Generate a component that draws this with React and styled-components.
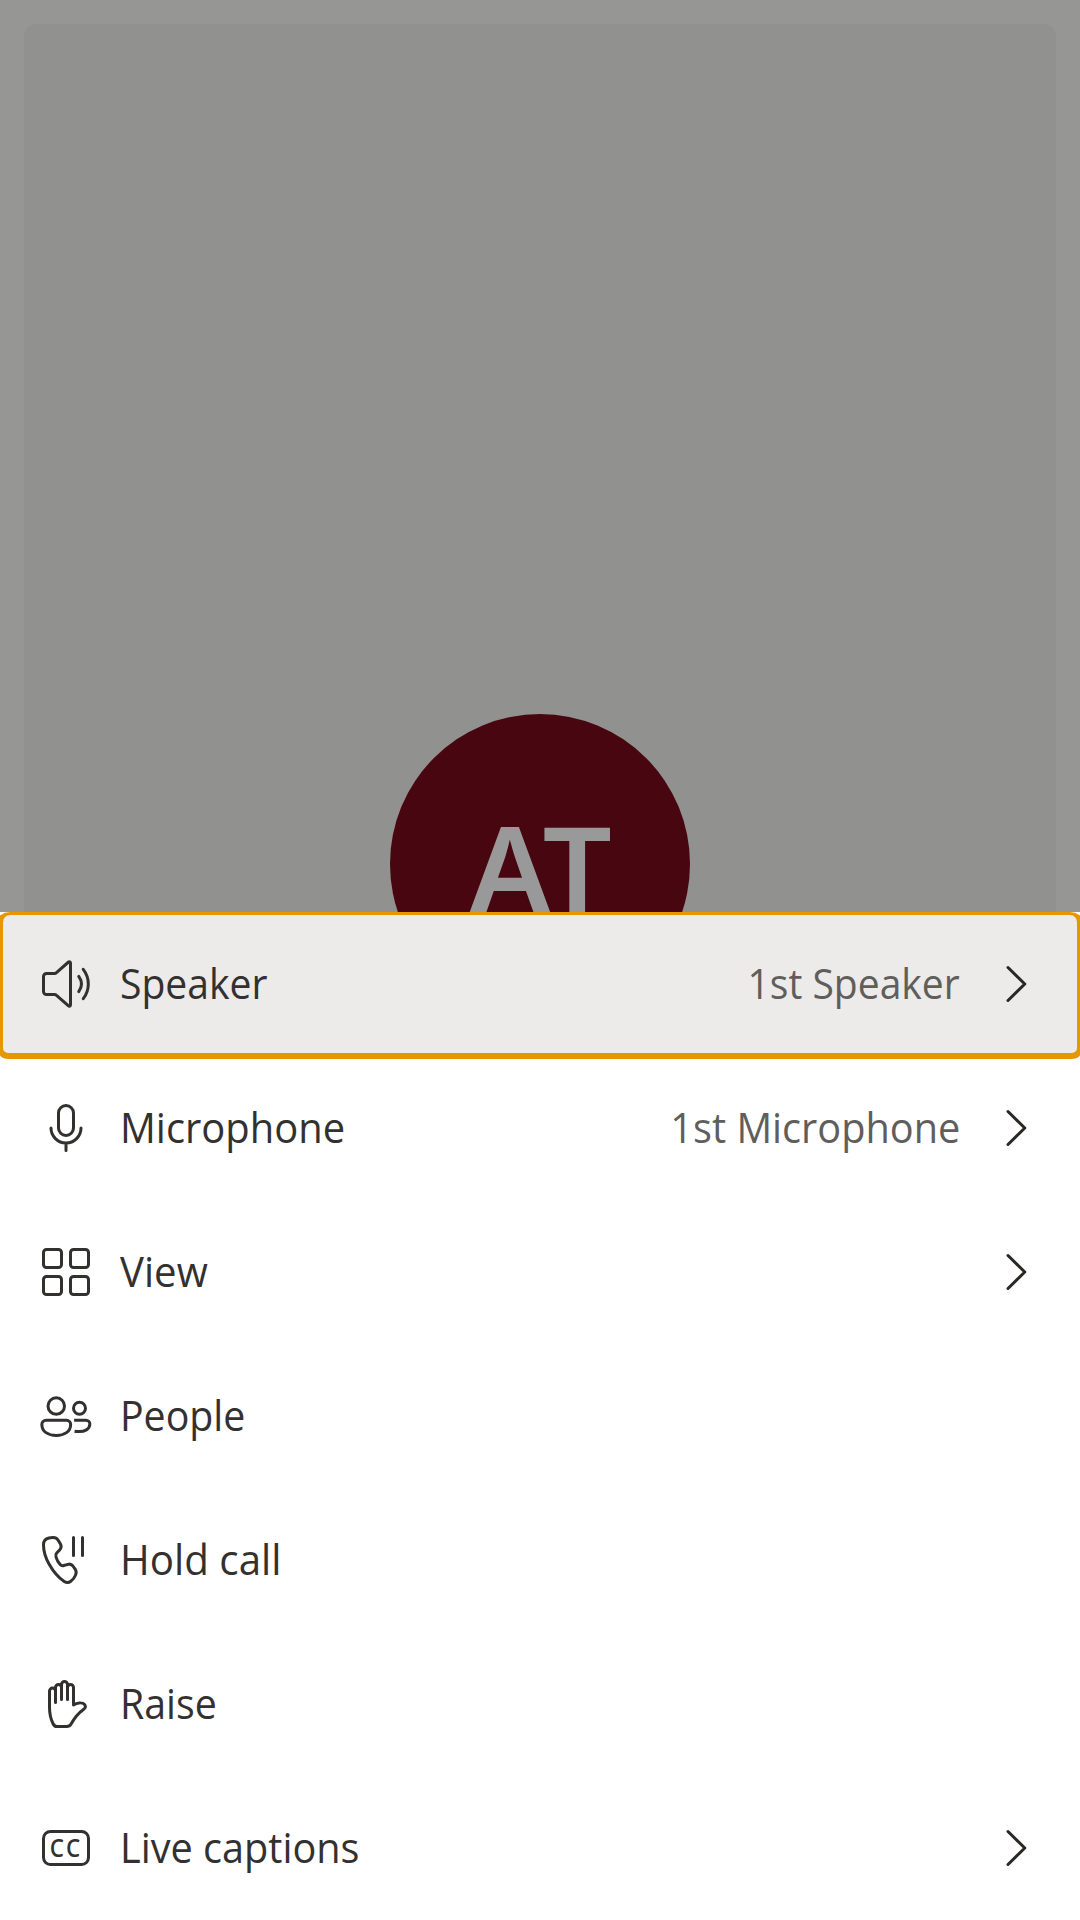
import React from "react";
import styled, { createGlobalStyle } from "styled-components";

const GlobalStyle = createGlobalStyle`
  body {
    margin: 0;
    background: #ffffff;
    font-family: "Open Sans", "Noto Sans", sans-serif;
  }
`;

const Screen = styled.main`
  display: flex;
  flex-direction: column;
  width: 1080px;
  height: 1920px;
  overflow: hidden;
  background: #ffffff;
`;

const CallStage = styled.section`
  box-sizing: border-box;
  flex: 0 0 912px;
  padding: 24px 24px 0;
  overflow: hidden;
  background: #969694;
`;

const ParticipantTile = styled.div`
  display: flex;
  justify-content: center;
  align-items: center;
  height: 1680px;
  border-radius: 12px;
  background: #91918f;
`;

const Avatar = styled.div`
  box-sizing: border-box;
  display: flex;
  justify-content: center;
  align-items: center;
  width: 300px;
  height: 300px;
  padding: 6px 0 0 1px;
  border-radius: 50%;
  background: #470610;
  color: #999999;
  font-family: "Noto Sans", "Open Sans", sans-serif;
  font-size: 122px;
  font-weight: 575;
  line-height: 1;
`;

const Sheet = styled.ul`
  display: flex;
  flex-direction: column;
  margin: 0;
  padding: 0;
  list-style: none;
`;

const Row = styled.li`
  position: relative;
  box-sizing: border-box;
  display: flex;
  align-items: center;
  gap: 24px;
  height: 144px;
  padding: 0 36px;
  color: #323130;
`;

const FocusRing = styled.span`
  position: absolute;
  z-index: 1;
  inset: 0 -3px -3px;
  border: solid #e59700;
  border-width: 3px 6px 6px;
  border-radius: 13px 13px 11px 11px / 10px 10px 11px 11px;
  background: #ecebe9;
`;

const Icon = styled.svg`
  position: relative;
  z-index: 2;
  flex: none;
  width: 60px;
  height: 60px;
  overflow: visible;
  fill: none;
  stroke: ${(p) => p.$tone || "#323130"};
  stroke-width: 1;
  stroke-linecap: round;
  stroke-linejoin: round;
`;

const Text = styled.span`
  position: relative;
  z-index: 2;
  padding-bottom: 2px;
  font-size: 41.5px;
  line-height: 56px;
  white-space: nowrap;
  transform: scaleX(${(p) => p.$squeeze});
`;

const Label = styled(Text)`
  flex: 1;
  transform-origin: left center;
`;

const Value = styled(Text)`
  color: #605e5c;
  transform-origin: right center;
`;

const CaptionMark = styled.text`
  fill: #323130;
  stroke: none;
  font-family: "Open Sans", sans-serif;
  font-size: 8.3px;
  font-weight: 600;
  letter-spacing: 0.75px;
`;

const icons = {
  speaker: (
    <>
      <path d="M6.3 6.5H3.5a1 1 0 0 0-1 1v5a1 1 0 0 0 1 1h2.8c.13 0 .25.05.34.13l4.2 3.7c.26.22.66.04.66-.3V2.97c0-.34-.4-.52-.66-.3l-4.2 3.7a.5.5 0 0 1-.34.13Z" />
      <path d="M14.25 7.45c1.15 1.6 1.15 3.5 0 5.1M15.75 5.1c2.25 2.9 2.25 6.9 0 9.8" />
    </>
  ),
  microphone: (
    <>
      <rect x="7.5" y="2.5" width="5" height="10" rx="2.5" />
      <path d="M5 10a5 5 0 0 0 10 0M10 15v2.5" />
    </>
  ),
  view: (
    <>
      <rect x="2.5" y="2.5" width="6" height="6" rx="1" />
      <rect x="11.5" y="2.5" width="6" height="6" rx="1" />
      <rect x="2.5" y="11.5" width="6" height="6" rx="1" />
      <rect x="11.5" y="11.5" width="6" height="6" rx="1" />
    </>
  ),
  people: (
    <>
      <circle cx="6.75" cy="6.7" r="2.75" />
      <circle cx="14.5" cy="7.4" r="2" />
      <path d="M3.4 11.4h6.7c.85 0 1.45.65 1.45 1.4 0 2.4-2.1 3.7-4.8 3.7s-4.8-1.3-4.8-3.7c0-.75.6-1.4 1.45-1.4Z" />
      <path d="M12.7 11.4h3.9c.8 0 1.35.6 1.35 1.3 0 1.8-1.9 2.5-3.5 2.5-.65 0-1.15-.04-1.6-.14" strokeLinecap="butt" />
    </>
  ),
  hold: (
    <>
      <path d="M4.3 2.65c.85-.2 1.6-.2 2.1-.05.55.15.8.45 1.1.95l.65 1.15c.35.65.25 1.35-.2 1.85L6.9 7.7c-.3.35-.4.75-.25 1.25.25.9.75 1.8 1.4 2.55.35.4.75.5 1.2.35l1.4-.4c.65-.2 1.25.02 1.65.55l.75 1.05c.45.65.45 1.25.15 1.95-.35.85-.9 1.6-1.6 2.1-.65.5-1.5.5-2.2.05-1.8-1.15-3.7-3.4-5.05-5.8C3.1 9.1 2.5 6.9 2.5 4.9c0-1.2.7-2 1.8-2.25Z" />
      <path d="M12.5 2.5v6M15.5 2.5v6" />
    </>
  ),
  raise: (
    <>
      <path d="M12.5 10.3V4.5a1 1 0 0 0-2 0v-1a1 1 0 0 0-2 0v1a1 1 0 0 0-2 0v1.2a1 1 0 0 0-2 0V11c0 2.2.35 3.9 1.15 5.5.3.65.7 1 1.3 1h3.3c.65 0 1.1-.25 1.45-.85 1.2-2.1 2.35-3.55 3.9-4.65.75-.55 1-.85.85-1.35-.2-.75-1.2-1.1-2.1-1-.7.05-1.2.25-1.85.65Z" />
      <path d="M6.5 5v4.5M8.5 4v4.5M10.5 4v4.5" />
    </>
  ),
  captions: (
    <>
      <rect x="2.5" y="4.5" width="15" height="11" rx="2.3" />
      <CaptionMark transform="translate(4.6 12.95) scale(0.9 1)">CC</CaptionMark>
    </>
  ),
  chevron: <path d="M8 4.5 13.6 10 8 15.5" />,
};

const rows = [
  { icon: "speaker", label: "Speaker", squeeze: 0.941, value: "1st Speaker", valueSqueeze: 0.94, opens: true, focused: true },
  { icon: "microphone", label: "Microphone", squeeze: 0.961, value: "1st Microphone", valueSqueeze: 0.956, opens: true },
  { icon: "view", label: "View", squeeze: 0.968, opens: true },
  { icon: "people", label: "People", squeeze: 0.946 },
  { icon: "hold", label: "Hold call", squeeze: 0.972 },
  { icon: "raise", label: "Raise", squeeze: 0.946 },
  { icon: "captions", label: "Live captions", squeeze: 0.955, opens: true },
];

function MenuRow({ row }) {
  return (
    <Row>
      {row.focused && <FocusRing />}
      <Icon viewBox="0 0 20 20">{icons[row.icon]}</Icon>
      <Label $squeeze={row.squeeze}>{row.label}</Label>
      {row.value && <Value $squeeze={row.valueSqueeze}>{row.value}</Value>}
      {row.opens && (
        <Icon viewBox="0 0 20 20" $tone="#292827">
          {icons.chevron}
        </Icon>
      )}
    </Row>
  );
}

export default function App() {
  return (
    <>
      <GlobalStyle />
      <Screen>
        <CallStage>
          <ParticipantTile>
            <Avatar>AT</Avatar>
          </ParticipantTile>
        </CallStage>
        <Sheet>
          {rows.map((row) => (
            <MenuRow key={row.label} row={row} />
          ))}
        </Sheet>
      </Screen>
    </>
  );
}
